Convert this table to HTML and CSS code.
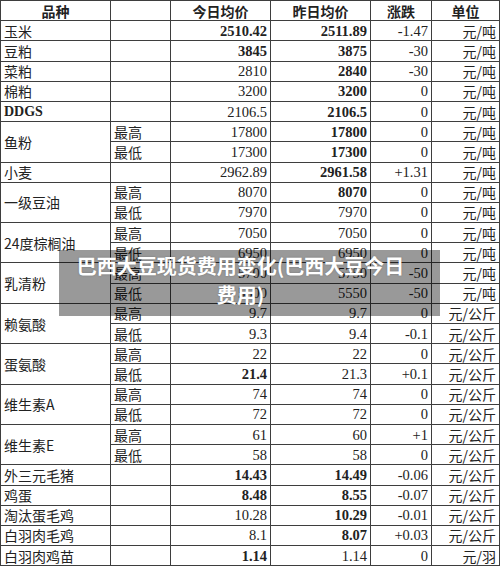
FILE: index.html
```html
<!DOCTYPE html>
<html lang="zh">
<head>
<meta charset="utf-8">
<title>巴西大豆现货费用变化</title>
<link rel="stylesheet" href="styles.css">
</head>
<body>
<div class="wrap">
<table class="grid">
<colgroup>
<col class="c1"><col class="c2"><col class="c3"><col class="c4"><col class="c5"><col class="c6">
</colgroup>
<thead>
<tr class="head"><th>品种</th><th></th><th>今日均价</th><th>昨日均价</th><th>涨跌</th><th>单位</th></tr>
</thead>
<tbody>
<tr><td class="name">玉米</td><td></td><td class="num b">2510.42</td><td class="num b">2511.89</td><td class="num">-1.47</td><td class="unit">元/吨</td></tr>
<tr><td class="name">豆粕</td><td></td><td class="num b">3845</td><td class="num b">3875</td><td class="num">-30</td><td class="unit">元/吨</td></tr>
<tr><td class="name">菜粕</td><td></td><td class="num">2810</td><td class="num b">2840</td><td class="num">-30</td><td class="unit">元/吨</td></tr>
<tr><td class="name">棉粕</td><td></td><td class="num">3200</td><td class="num b">3200</td><td class="num">0</td><td class="unit">元/吨</td></tr>
<tr><td class="name latin b">DDGS</td><td></td><td class="num">2106.5</td><td class="num b">2106.5</td><td class="num">0</td><td class="unit">元/吨</td></tr>
<tr><td class="name" rowspan="2">鱼粉</td><td class="sub">最高</td><td class="num">17800</td><td class="num b">17800</td><td class="num">0</td><td class="unit">元/吨</td></tr>
<tr><td class="sub">最低</td><td class="num">17300</td><td class="num b">17300</td><td class="num">0</td><td class="unit">元/吨</td></tr>
<tr><td class="name">小麦</td><td></td><td class="num">2962.89</td><td class="num b">2961.58</td><td class="num">+1.31</td><td class="unit">元/吨</td></tr>
<tr><td class="name" rowspan="2">一级豆油</td><td class="sub">最高</td><td class="num">8070</td><td class="num b">8070</td><td class="num">0</td><td class="unit">元/吨</td></tr>
<tr><td class="sub">最低</td><td class="num">7970</td><td class="num">7970</td><td class="num">0</td><td class="unit">元/吨</td></tr>
<tr><td class="name" rowspan="2">24度棕榈油</td><td class="sub">最高</td><td class="num">7050</td><td class="num">7050</td><td class="num">0</td><td class="unit">元/吨</td></tr>
<tr><td class="sub">最低</td><td class="num">6950</td><td class="num">6950</td><td class="num">0</td><td class="unit">元/吨</td></tr>
<tr><td class="name" rowspan="2">乳清粉</td><td class="sub">最高</td><td class="num">5700</td><td class="num">5750</td><td class="num">-50</td><td class="unit">元/吨</td></tr>
<tr><td class="sub">最低</td><td class="num">5500</td><td class="num">5550</td><td class="num">-50</td><td class="unit">元/吨</td></tr>
<tr><td class="name" rowspan="2">赖氨酸</td><td class="sub">最高</td><td class="num">9.7</td><td class="num">9.7</td><td class="num">0</td><td class="unit">元/公斤</td></tr>
<tr><td class="sub">最低</td><td class="num">9.3</td><td class="num">9.4</td><td class="num">-0.1</td><td class="unit">元/公斤</td></tr>
<tr><td class="name" rowspan="2">蛋氨酸</td><td class="sub">最高</td><td class="num">22</td><td class="num">22</td><td class="num">0</td><td class="unit">元/公斤</td></tr>
<tr><td class="sub">最低</td><td class="num b">21.4</td><td class="num">21.3</td><td class="num">+0.1</td><td class="unit">元/公斤</td></tr>
<tr><td class="name" rowspan="2">维生素A</td><td class="sub">最高</td><td class="num">74</td><td class="num">74</td><td class="num">0</td><td class="unit">元/公斤</td></tr>
<tr><td class="sub">最低</td><td class="num">72</td><td class="num">72</td><td class="num">0</td><td class="unit">元/公斤</td></tr>
<tr><td class="name" rowspan="2">维生素E</td><td class="sub">最高</td><td class="num">61</td><td class="num">60</td><td class="num">+1</td><td class="unit">元/公斤</td></tr>
<tr><td class="sub">最低</td><td class="num">58</td><td class="num">58</td><td class="num">0</td><td class="unit">元/公斤</td></tr>
<tr><td class="name">外三元毛猪</td><td></td><td class="num b">14.43</td><td class="num b">14.49</td><td class="num">-0.06</td><td class="unit">元/公斤</td></tr>
<tr><td class="name">鸡蛋</td><td></td><td class="num b">8.48</td><td class="num b">8.55</td><td class="num">-0.07</td><td class="unit">元/公斤</td></tr>
<tr><td class="name">淘汰蛋毛鸡</td><td></td><td class="num">10.28</td><td class="num b">10.29</td><td class="num">-0.01</td><td class="unit">元/公斤</td></tr>
<tr><td class="name">白羽肉毛鸡</td><td></td><td class="num">8.1</td><td class="num b">8.07</td><td class="num">+0.03</td><td class="unit">元/公斤</td></tr>
<tr><td class="name">白羽肉鸡苗</td><td></td><td class="num b">1.14</td><td class="num">1.14</td><td class="num">0</td><td class="unit">元/羽</td></tr>
</tbody>
</table>
<div class="banner">巴西大豆现货费用变化(巴西大豆今日费用)</div>
</div>
</body>
</html>
```
FILE: styles.css
```css
html, body {
  margin: 0;
  padding: 0;
  background: #ffffff;
}

.wrap {
  position: relative;
  width: 500px;
  height: 567px;
  overflow: hidden;
}

.grid {
  border-collapse: collapse;
  table-layout: fixed;
  width: 499px;
  font-family: "Noto Sans CJK SC", "Liberation Serif", serif;
  font-size: 14px;
  color: #222;
}

.c1 { width: 110px; }
.c2 { width: 60px; }
.c3 { width: 100px; }
.c4 { width: 100px; }
.c5 { width: 61px; }
.c6 { width: 68px; }

.grid tr {
  height: 20.2px;
}

.grid th,
.grid td {
  border: 1px solid #3e3e3e;
  padding: 0 3px;
  line-height: 18px;
  white-space: nowrap;
  overflow: hidden;
}

.grid th {
  font-weight: 700;
  text-align: center;
}

.name {
  text-align: left;
  vertical-align: middle;
  padding-left: 3px;
}

.latin {
  font-family: "Liberation Serif", serif;
}

.sub {
  text-align: left;
}

.num {
  text-align: right;
  font-family: "Liberation Serif", serif;
  font-size: 14.5px;
  padding-right: 4px;
}

.unit {
  text-align: right;
  padding-right: 2px;
}

.b {
  font-weight: 700;
}

.banner {
  position: absolute;
  left: 59px;
  top: 250px;
  width: 381px;
  height: 66px;
  box-sizing: border-box;
  padding: 1px 26px 0 8px;
  background: rgba(0, 0, 0, 0.4);
  color: #ffffff;
  font-family: "Noto Sans CJK SC", sans-serif;
  font-weight: 700;
  font-size: 20px;
  line-height: 29px;
  text-align: center;
  text-shadow: 0 0 2px rgba(0, 0, 0, 0.25);
}
```
